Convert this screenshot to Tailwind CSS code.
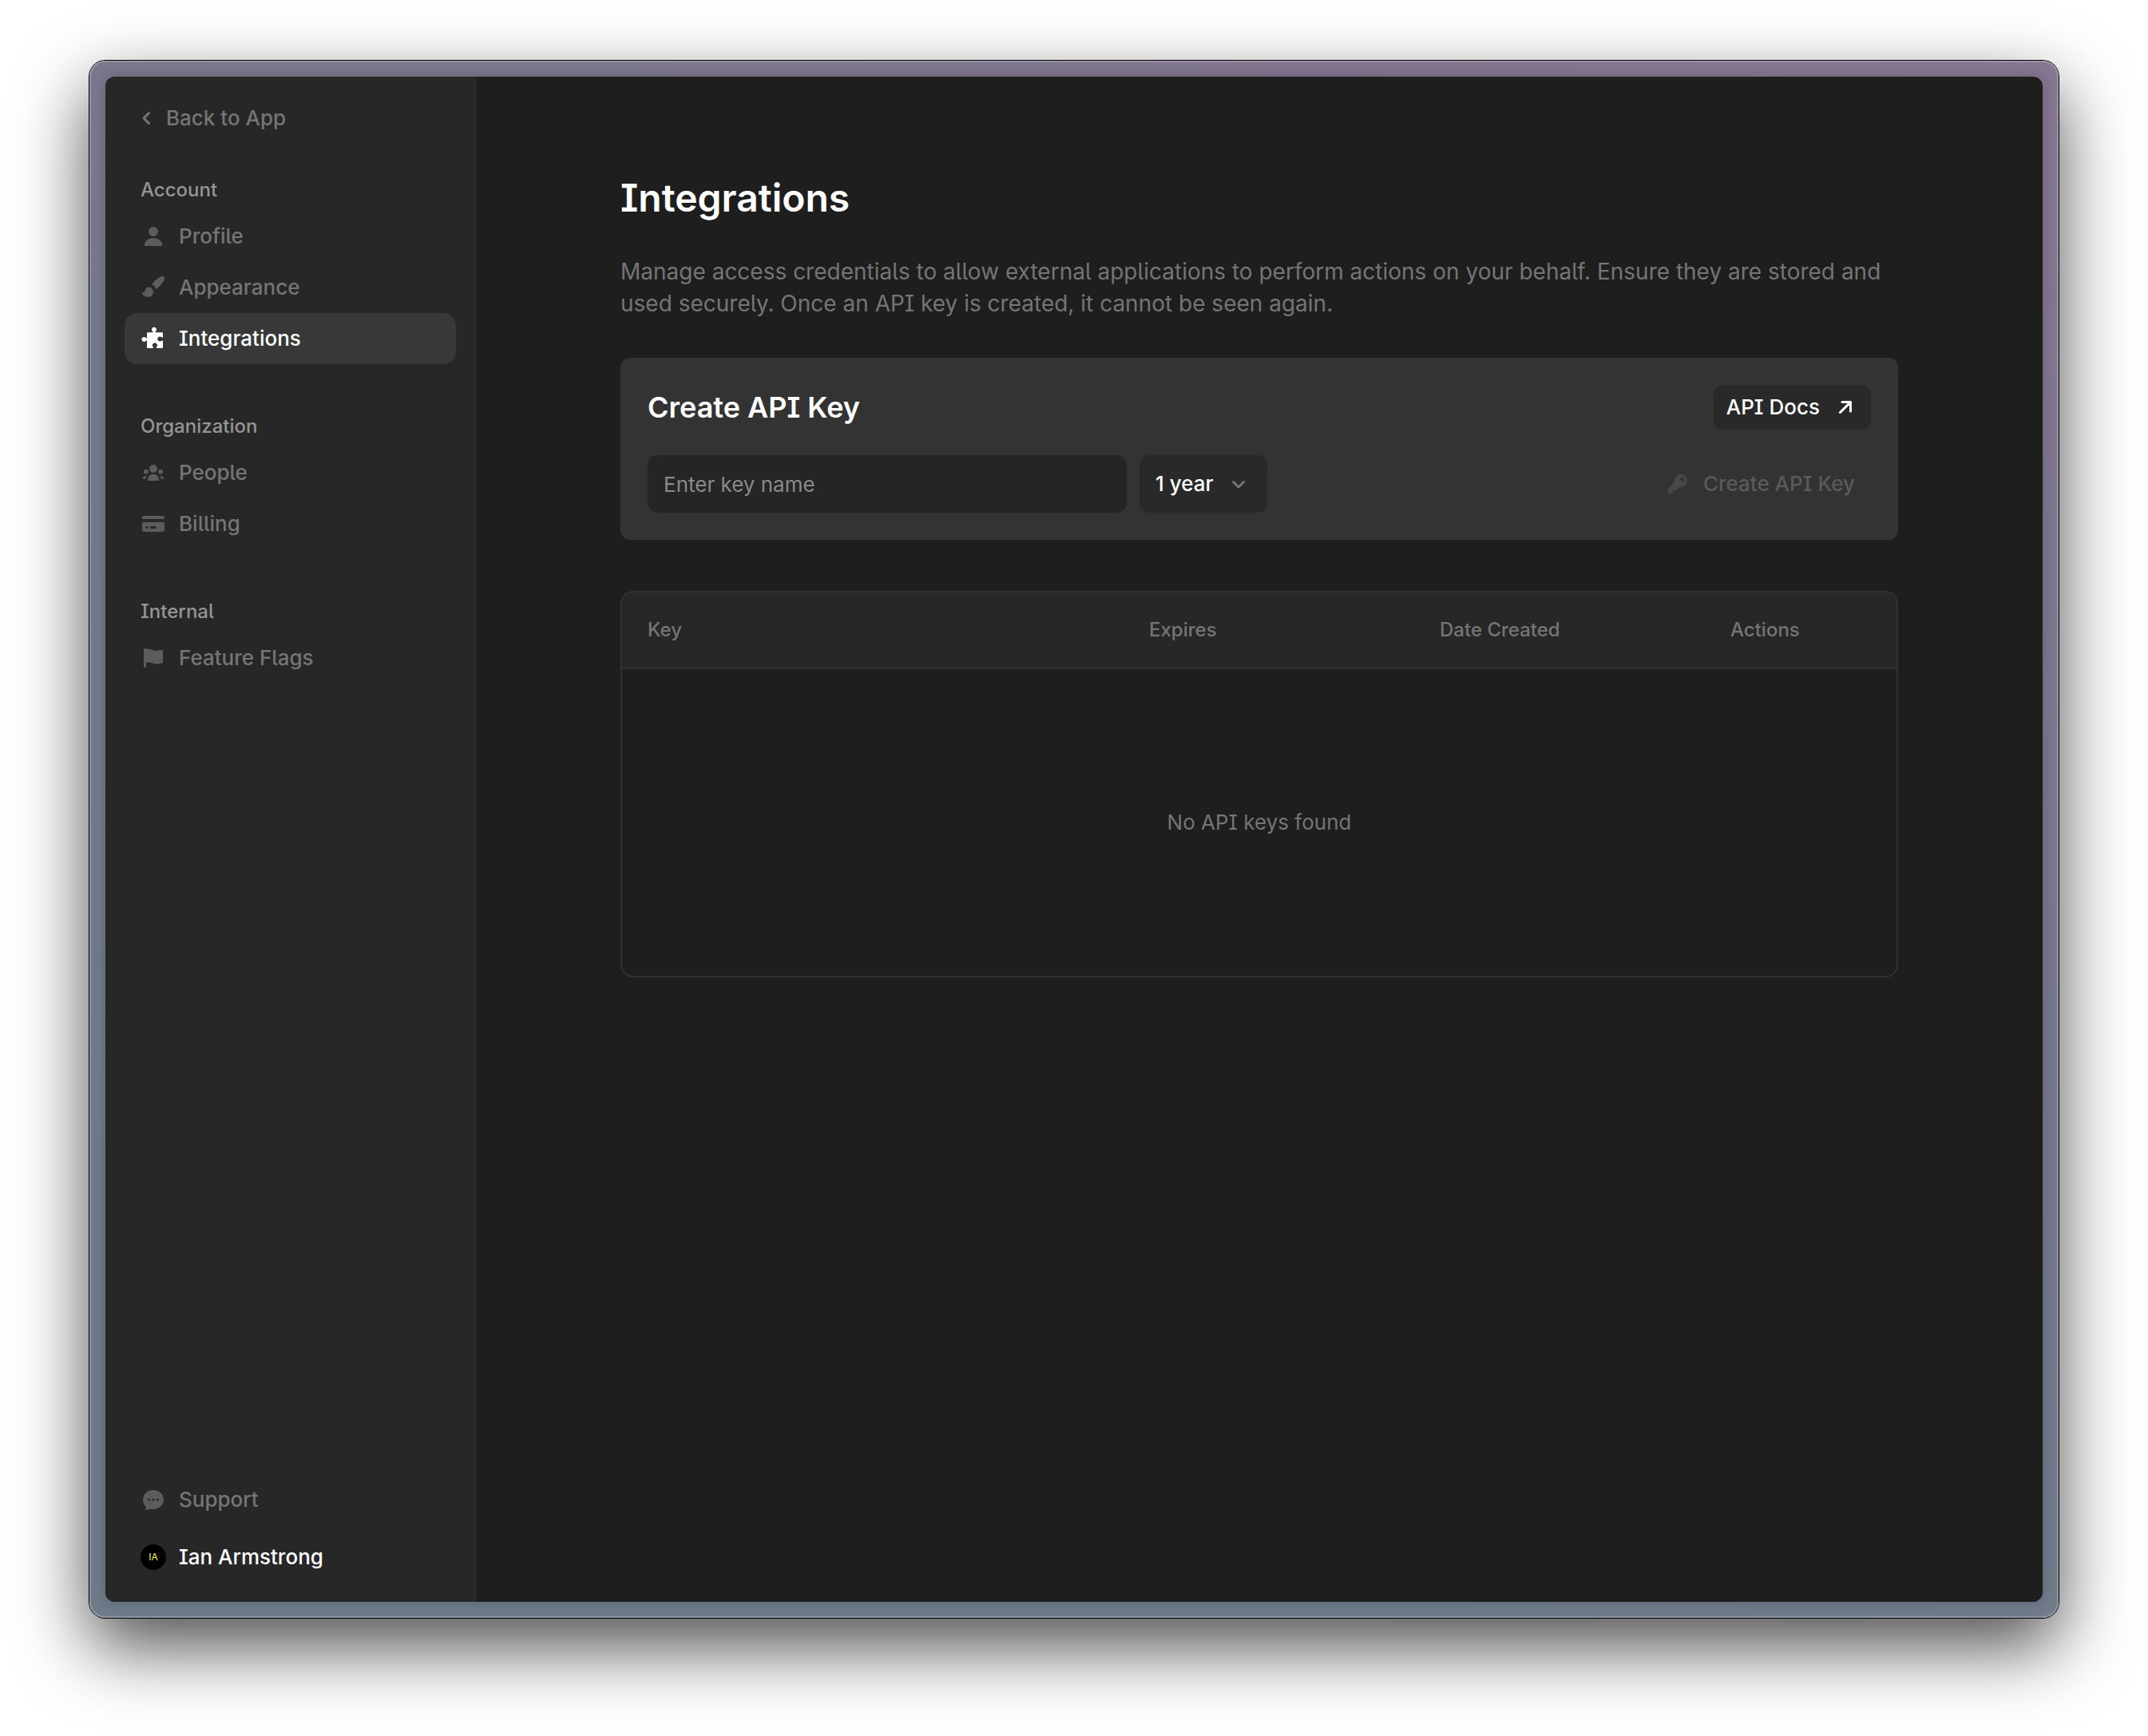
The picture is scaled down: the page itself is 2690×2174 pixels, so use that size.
<!DOCTYPE html>
<html lang="en">
<head>
  <meta charset="UTF-8" />
  <meta name="viewport" content="width=device-width, initial-scale=1" />
  <title>Integrations</title>
  <script src="https://cdn.jsdelivr.net/npm/@tailwindcss/browser@4"></script>
</head>

<body class="min-h-screen flex bg-white px-28 pt-[76px] pb-[148px] font-['Inter',sans-serif] [font-feature-settings:'cv05','cv08'] antialiased text-[26px] leading-8">
  <!-- Window frame -->
  <div class="flex-1 flex rounded-[20px] border-2 border-white/20 bg-linear-[200deg] from-[#86768f] via-[#77788c] via-40% to-[#6e7c89] to-80% bg-origin-border p-[18px] shadow-[0_0_0_1px_#000,0_36px_90px_rgb(0_0_0/0.7)]">
    <div class="flex-1 flex min-w-0 rounded-xl overflow-hidden bg-[#1e1e1e] shadow-[0_0_16px_rgb(0_0_0/0.2)]">

      <!-- Sidebar -->
      <aside class="w-[464px] shrink-0 flex flex-col bg-[#272727] border-r border-[#333] px-6 pt-5 pb-6 font-medium text-[#757575]">
        <a href="#" class="h-16 px-5 mb-10 flex items-center gap-4">
          <svg class="w-4 h-8" viewBox="0 0 16 32" fill="none" stroke="currentColor" stroke-width="3" stroke-linecap="round" stroke-linejoin="round"><path d="M10.5 9.5 4 16l6.5 6.5" /></svg>
          Back to App
        </a>

        <nav class="flex flex-col gap-[60px]">
          <section>
            <h3 class="px-5 pb-2 text-2xl leading-9 text-[#959595]">Account</h3>
            <a href="#" class="h-16 px-5 flex items-center gap-4 rounded-2xl">
              <svg class="size-8 text-[#5c5c5c]" viewBox="0 0 32 32" fill="currentColor"><circle cx="16" cy="10" r="6" /><path d="M5 27.2C5 22.2 9.6 18 16 18s11.2 4.2 11.2 9.2c0 .5-.3.8-.8.8H5.8c-.5 0-.8-.3-.8-.8z" /></svg>
              Profile
            </a>
            <a href="#" class="h-16 px-5 flex items-center gap-4 rounded-2xl">
              <svg class="size-8 text-[#5c5c5c]" viewBox="0 0 32 32" fill="currentColor"><path d="M14.2 12.2C17 8 22 3.6 25.6 2.2c2.8-1 5.2.9 4.2 3.8-1.2 3.4-6 9.4-10.6 12.4-.6-3-2.3-5.4-5-6.2z" /><path d="M10.8 15.6a5.6 5.6 0 0 1 5.2 5.6c0 4-3 6.8-7 6.8-3.8 0-6.6-2.2-7-5.4 0-.6.4-.9.9-.7 1.2.5 2.4.2 2.5-1.2.2-3 2.500-5.100 5.400-5.100z" /></svg>
              Appearance
            </a>
            <a href="#" aria-current="page" class="h-16 px-5 flex items-center gap-4 rounded-2xl bg-[#383838] text-white">
              <svg class="size-8" viewBox="0 0 32 32" fill="currentColor"><path d="M8 9.5c0-.8.6-1.300 1.300-1.300h6.300V7.300a3 3 0 1 1 2.800 0v.9h8.300c.8 0 1.300.5 1.300 1.300v5.100c-.8.300-1.200 0-2-.6a3 3 0 1 0 0 5c.8-.6 1.300-.7 2-.4v8.100c0 .8-.5 1.300-1.300 1.300H20c-.3-.8 0-1.300.4-1.900a3 3 0 1 0-5 0c.5.700.7 1.200.4 1.900H9.300c-.8 0-1.300-.5-1.300-1.300v-8.200H7a3 3 0 1 1 0-3h1z" /></svg>
              Integrations
            </a>
          </section>

          <section>
            <h3 class="px-5 pb-2 text-2xl leading-9 text-[#959595]">Organization</h3>
            <a href="#" class="h-16 px-5 flex items-center gap-4 rounded-2xl">
              <svg class="size-8 text-[#5c5c5c]" viewBox="0 0 32 32" fill="currentColor"><circle cx="16" cy="11" r="5" /><circle cx="6.9" cy="14.8" r="3" /><circle cx="25.1" cy="14.8" r="3" /><path d="M8.700 24.400c.8-4 3.700-6.600 7.300-6.600s6.500 2.600 7.300 6.600c.2.900-.4 1.600-1.300 1.600H10c-.9 0-1.500-.7-1.300-1.600z" /><path d="M7.900 20c-1 1.100-1.600 2.400-1.900 4H3.500c-.6 0-1-.5-.8-1.100C3.400 20.800 5.200 19.800 7.900 20zM24.100 20c1 1.100 1.600 2.400 1.900 4h2.500c.6 0 1-.5.8-1.100-.7-2.100-2.500-3.100-5.200-2.900z" /></svg>
              People
            </a>
            <a href="#" class="h-16 px-5 flex items-center gap-4 rounded-2xl">
              <svg class="size-8 text-[#5c5c5c]" viewBox="0 0 32 32" fill="currentColor"><path d="M5 6h22a3 3 0 0 1 3 3v1H2V9a3 3 0 0 1 3-3z" /><path fill-rule="evenodd" d="M2 14h28v9a3 3 0 0 1-3 3H5a3 3 0 0 1-3-3zm5.700 4.900a1.600 1.600 0 0 0 0 3.200h.4a1.600 1.600 0 0 0 0-3.200zm5.800 0a1.600 1.600 0 0 0 0 3.200h5a1.600 1.600 0 0 0 0-3.200z" /></svg>
              Billing
            </a>
          </section>

          <section>
            <h3 class="px-5 pb-2 text-2xl leading-9 text-[#959595]">Internal</h3>
            <a href="#" class="h-16 px-5 flex items-center gap-4 rounded-2xl">
              <svg class="size-8 text-[#5c5c5c]" viewBox="0 0 32 32" fill="currentColor"><path d="M4 5.400C4 4.600 4.700 4 5.500 4c.6 0 1 .2 1.300.6C12 3.600 15 6.900 20 7c2.400 0 4.400-.5 6.600-.9.800-.1 1.400.4 1.400 1.100V21c0 .8-.4 1.300-1.200 1.500C22 23.900 18 23.600 14.500 22.400 11.500 21.300 9 21.300 7 22v4.400a1.500 1.500 0 0 1-3 0z" /></svg>
              Feature Flags
            </a>
          </section>
        </nav>

        <div class="mt-auto flex flex-col gap-2">
          <a href="#" class="h-16 px-5 flex items-center gap-4 rounded-2xl">
            <svg class="size-8 text-[#5c5c5c]" viewBox="0 0 32 32" fill="currentColor"><path fill-rule="evenodd" d="M16 4c7.400 0 13 5.200 13 12s-5.600 12-13 12c-1.400 0-2.600-.1-3.800-.5-1.600.9-3.700 1.400-5.600 1.200-.6-.1-.8-.7-.4-1.200.5-.7.800-1.600.7-2.600C4.400 22.700 3 19.500 3 16 3 9.200 8.600 4 16 4zm-5.300 10.400a1.600 1.600 0 1 0 0 3.200 1.600 1.600 0 0 0 0-3.200zm5.300 0a1.600 1.600 0 1 0 0 3.200 1.600 1.600 0 0 0 0-3.200zm5.300 0a1.600 1.600 0 1 0 0 3.200 1.600 1.600 0 0 0 0-3.200z" /></svg>
            Support
          </a>
          <a href="#" class="h-16 px-5 flex items-center gap-4 rounded-2xl text-white">
            <span class="size-8 rounded-full bg-black flex items-center justify-center text-xs font-normal text-[#fff150] [font-feature-settings:normal]">IA</span>
            Ian Armstrong
          </a>
        </div>
      </aside>

      <!-- Content -->
      <main class="flex-1 min-w-0 px-8 pt-[124px]">
        <div class="max-w-[1600px] mx-auto">
          <h1 class="text-5xl leading-14 font-semibold text-white">Integrations</h1>
          <p class="mt-11 text-[28px] leading-10 text-[#757575]">Manage access credentials to allow external applications to perform actions on your behalf. Ensure they are stored and used securely. Once an API key is created, it cannot be seen again.</p>

          <section class="mt-12 rounded-xl bg-[#333] p-[34px]">
            <div class="flex items-center justify-between">
              <h2 class="text-4xl font-semibold text-white">Create API Key</h2>
              <a href="#" class="h-14 px-4 flex items-center gap-4 rounded-xl bg-[#292929] font-medium text-white">
                API Docs
                <svg class="size-8" viewBox="0 0 32 32" fill="none" stroke="currentColor" stroke-width="3" stroke-linecap="round" stroke-linejoin="round"><path d="M12 9.5h10.5V21M22.5 9.5l-13 13" /></svg>
              </a>
            </div>

            <form class="mt-8 flex items-center gap-4">
              <input type="text" aria-label="Key name" placeholder="Enter key name" class="w-[600px] h-18 px-5 rounded-xl bg-[#252525] text-white placeholder:text-[#8a8a8a] outline-none" />
              <div class="relative">
                <select aria-label="Expiration" class="appearance-none w-40 h-18 pl-5 pr-12 rounded-xl bg-[#292929] font-medium text-white">
                  <option>1 year</option>
                </select>
                <svg class="absolute right-5 top-5 size-8 text-[#757575] pointer-events-none" viewBox="0 0 32 32" fill="none" stroke="currentColor" stroke-width="3" stroke-linecap="round" stroke-linejoin="round"><path d="m9.5 13.5 6.5 6.5 6.5-6.5" /></svg>
              </div>
              <button type="submit" disabled class="ml-auto h-18 px-5 flex items-center gap-4 font-medium text-[#5a5a5a]">
                <svg class="size-8 text-[#484848]" viewBox="0 0 32 32" fill="currentColor"><path fill-rule="evenodd" d="M20 4a8 8 0 1 1-1.700 15.800L14.600 23.400c-.3.400-.8.600-1.300.6H10v2.600c0 .8-.6 1.400-1.400 1.400H5.400C4.600 28 4 27.400 4 26.600v-3.800c0-.6.2-1.100.6-1.500l7.600-7.600A8 8 0 0 1 20 4zm-.2 4.300c-1 1-.7 2.400.5 3.500s2.500 1.400 3.500.4c.9-1 .6-2.300-.5-3.400-1.200-1.200-2.500-1.500-3.500-.5z" /></svg>
                Create API Key
              </button>
            </form>
          </section>

          <div class="mt-16 rounded-2xl border-2 border-[#323232] overflow-hidden">
            <table class="w-full table-fixed border-separate border-spacing-0 text-[#757575]">
              <thead>
                <tr class="bg-[#272727] text-left text-2xl">
                  <th class="h-24 px-8 border-b-2 border-[#323232] font-medium">Key</th>
                  <th class="w-[364px] px-8 border-b-2 border-[#323232] font-medium">Expires</th>
                  <th class="w-[364px] px-8 border-b-2 border-[#323232] font-medium">Date Created</th>
                  <th class="w-60 px-8 border-b-2 border-[#323232] font-medium">Actions</th>
                </tr>
              </thead>
              <tbody>
                <tr>
                  <td colspan="4" class="h-96 text-center">No API keys found</td>
                </tr>
              </tbody>
            </table>
          </div>
        </div>
      </main>
    </div>
  </div>
</body>
</html>
